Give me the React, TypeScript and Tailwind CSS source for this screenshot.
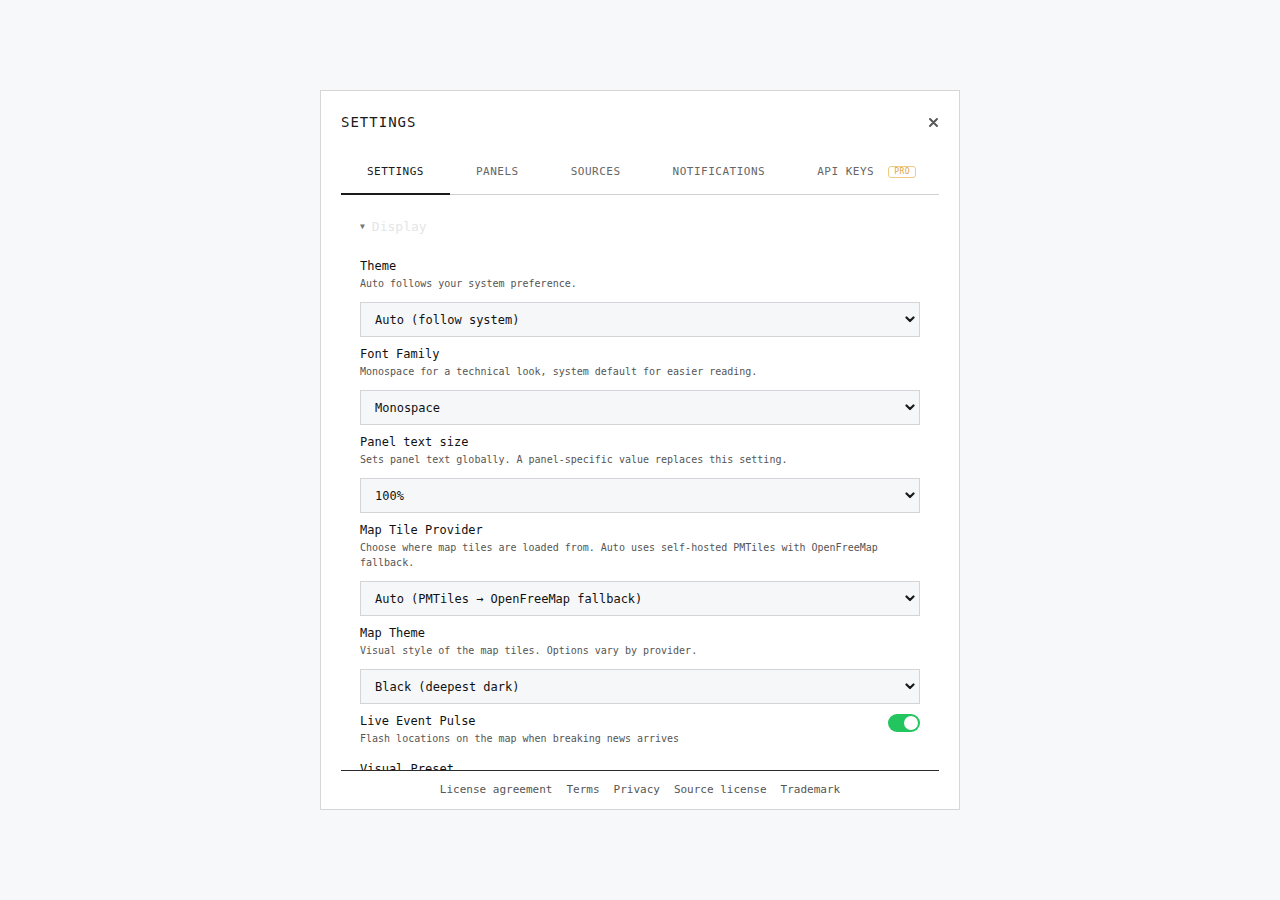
import { useState } from 'react';

const mono = { fontFamily: '"DejaVu Sans Mono", "Liberation Mono", monospace' };

const tabs = ['SETTINGS', 'PANELS', 'SOURCES', 'NOTIFICATIONS', 'API KEYS'];

type SelectSetting = {
  label: string;
  desc: string[];
  value: string;
};

const selects: SelectSetting[] = [
  { label: 'Theme', desc: ['Auto follows your system preference.'], value: 'Auto (follow system)' },
  {
    label: 'Font Family',
    desc: ['Monospace for a technical look, system default for easier reading.'],
    value: 'Monospace',
  },
  {
    label: 'Panel text size',
    desc: ['Sets panel text globally. A panel-specific value replaces this setting.'],
    value: '100%',
  },
  {
    label: 'Map Tile Provider',
    desc: ['Choose where map tiles are loaded from. Auto uses self-hosted PMTiles with OpenFreeMap', 'fallback.'],
    value: 'Auto (PMTiles \u2192 OpenFreeMap fallback)',
  },
  {
    label: 'Map Theme',
    desc: ['Visual style of the map tiles. Options vary by provider.'],
    value: 'Black (deepest dark)',
  },
];

const Chevron = () => (
  <svg width="10" height="7" viewBox="0 0 10 7" className="pointer-events-none absolute right-[5px] top-[14px]">
    <path d="M1.5 1.5 L5 5 L8.5 1.5" fill="none" stroke="#1a1a1a" strokeWidth="2.2" strokeLinecap="round" strokeLinejoin="round" />
  </svg>
);

const SelectRow = ({ s }: { s: SelectSetting }) => (
  <div className="mb-[9px]">
    <div className="text-[12px] leading-4 text-[#111]">{s.label}</div>
    <div className="mt-[2px] text-[10px] leading-[15px] text-[#555]">
      {s.desc.map((d) => (
        <div key={d}>{d}</div>
      ))}
    </div>
    <div className="relative mt-[11px]">
      <select
        defaultValue={s.value}
        className="h-[35px] w-full appearance-none border border-[#d2d4d8] bg-[#f6f7f9] pl-[14px] text-[12px] text-[#111] outline-none"
        style={mono}
      >
        <option>{s.value}</option>
      </select>
      <Chevron />
    </div>
  </div>
);

export default function App() {
  const [active, setActive] = useState(0);
  const [pulse, setPulse] = useState(true);

  return (
    <div className="flex min-h-[900px] items-start justify-center bg-[#f7f8fa] pt-[90px]" style={mono}>
      <div className="flex h-[720px] w-[640px] flex-col border border-[#d6d6d6] bg-white px-5">
        {/* header */}
        <div className="flex items-center justify-between pt-[21px]">
          <h2 className="text-[14px] leading-5 tracking-[1px] text-[#1a1a1a]">SETTINGS</h2>
          <button type="button" className="mr-[-4px] flex h-5 w-5 items-center justify-center">
            <svg width="9" height="9" viewBox="0 0 9 9">
              <path d="M1 1 L8 8 M8 1 L1 8" stroke="#555" strokeWidth="1.9" strokeLinecap="round" />
            </svg>
          </button>
        </div>

        {/* tabs */}
        <div className="mt-[21px] flex border-b border-[#d0d0d0]">
          {tabs.map((t, i) => (
            <button
              key={t}
              type="button"
              onClick={() => setActive(i)}
              className={
                'flex shrink-0 items-center whitespace-nowrap -mb-px border-b-2 px-[26px] pt-[12px] pb-[14px] text-[11px] leading-[14px] tracking-[0.5px] ' +
                (active === i ? 'border-[#1a1a1a] text-[#1a1a1a]' : 'border-transparent text-[#666]')
              }
            >
              {t}
              {t === 'API KEYS' && (
                <span className="ml-[14px] rounded-[3px] border border-[#eecb85] px-[5px] text-[8px] leading-[10px] tracking-[0.5px] text-[#dfa53a]">
                  PRO
                </span>
              )}
            </button>
          ))}
        </div>

        {/* scrollable settings body */}
        <div className="flex-1 overflow-hidden px-[19px] pt-[24px]">
          <div className="flex items-center gap-[7px] text-[13px] leading-4">
            <span className="text-[8px] text-[#777]">▼</span>
            <span className="text-[#e4e5e7]">Display</span>
          </div>

          <div className="mt-[23px]">
            {selects.map((s) => (
              <SelectRow key={s.label} s={s} />
            ))}

            <div className="mb-[15px] flex items-start justify-between">
              <div>
                <div className="text-[12px] leading-4 text-[#111]">Live Event Pulse</div>
                <div className="mt-[2px] text-[10px] leading-[15px] text-[#555]">
                  Flash locations on the map when breaking news arrives
                </div>
              </div>
              <button
                type="button"
                onClick={() => setPulse(!pulse)}
                className={
                  'mt-[1px] flex h-[18px] w-8 items-center rounded-full p-[2px] ' +
                  (pulse ? 'justify-end bg-[#22c55e]' : 'justify-start bg-[#ccc]')
                }
              >
                <span className="h-[14px] w-[14px] rounded-full bg-white" />
              </button>
            </div>

            <div className="text-[12px] leading-4 text-[#111]">Visual Preset</div>
            <div className="mt-[2px] text-[10px] leading-[15px] text-[#555]">Choose how dense the dashboard looks.</div>
          </div>
        </div>

        {/* footer links */}
        <div className="flex h-[39px] items-center justify-center gap-[14px] border-t border-[#2b2b2b] pb-px text-[11px] leading-[14px] text-[#555]">
          <a>License agreement</a>
          <a>Terms</a>
          <a>Privacy</a>
          <a>Source license</a>
          <a>Trademark</a>
        </div>
      </div>
    </div>
  );
}
